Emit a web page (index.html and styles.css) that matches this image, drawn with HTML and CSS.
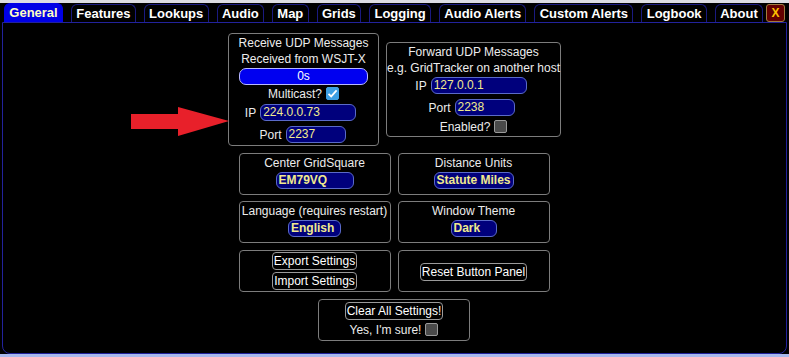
FILE: index.html
```html
<!DOCTYPE html>
<html>
<head>
<meta charset="utf-8">
<link rel="stylesheet" href="styles.css">
</head>
<body>
<div class="topstrip"></div>
<div class="tabs">
  <div class="tab active">General</div>
  <div class="tab">Features</div>
  <div class="tab">Lookups</div>
  <div class="tab">Audio</div>
  <div class="tab">Map</div>
  <div class="tab">Grids</div>
  <div class="tab">Logging</div>
  <div class="tab">Audio Alerts</div>
  <div class="tab">Custom Alerts</div>
  <div class="tab">Logbook</div>
  <div class="tab">About</div>
  <div class="close">X</div>
</div>
<div class="panel">
  <div class="row row1">
    <div class="box recv">
      <div class="line">Receive UDP Messages</div>
      <div class="line">Received from WSJT-X</div>
      <div class="bar">0s</div>
      <div class="field">Multicast? <span class="cb checked"><svg width="13" height="13" viewBox="0 0 13 13"><path d="M2.5 6.8 L5.2 9.4 L10.6 3.4" fill="none" stroke="#fff" stroke-width="1.8"/></svg></span></div>
      <div class="field f-ip">IP <span class="inp w95">224.0.0.73</span></div>
      <div class="field f-port">Port <span class="inp w59">2237</span></div>
    </div>
    <div class="box fwd">
      <div class="line">Forward UDP Messages</div>
      <div class="line">e.g. GridTracker on another host</div>
      <div class="field f-ip2">IP <span class="inp w95">127.0.0.1</span></div>
      <div class="field f-port2">Port <span class="inp w59">2238</span></div>
      <div class="field f-en">Enabled? <span class="cb"></span></div>
    </div>
  </div>
  <div class="row">
    <div class="box small">
      <div class="line">Center GridSquare</div>
      <span class="inp bold w77">EM79VQ</span>
    </div>
    <div class="box small">
      <div class="line">Distance Units</div>
      <span class="inp bold sel w79">Statute Miles</span>
    </div>
  </div>
  <div class="row row3">
    <div class="box small">
      <div class="line">Language (requires restart)</div>
      <span class="inp bold sel w52">English</span>
    </div>
    <div class="box small">
      <div class="line">Window Theme</div>
      <span class="inp bold sel w45">Dark</span>
    </div>
  </div>
  <div class="row">
    <div class="box small btns">
      <span class="btn">Export Settings</span>
      <span class="btn">Import Settings</span>
    </div>
    <div class="box small center">
      <span class="btn">Reset Button Panel</span>
    </div>
  </div>
  <div class="row">
    <div class="box small clear">
      <span class="btn">Clear All Settings!</span>
      <div class="field f-sure">Yes, I'm sure! <span class="cb"></span></div>
    </div>
  </div>
  <svg class="arrow" width="102" height="32" viewBox="0 0 102 32"><polygon points="2,8 49,8 49,1 100,15 49,30 49,23 2,23" fill="#e8202a"/></svg>
</div>
<div class="bottomstrip"></div>
</body>
</html>
```
FILE: styles.css
```css
html, body {
  margin: 0;
  padding: 0;
  background: #000;
  width: 789px;
  height: 357px;
  overflow: hidden;
  font-family: "Liberation Sans", Arial, sans-serif;
}
.topstrip {
  height: 3px;
  background: #dcdce2;
}
.tabs {
  display: flex;
  gap: 8px;
  padding-left: 4px;
  height: 19px;
  align-items: flex-end;
  background: #000;
}
.tab {
  height: 18px;
  box-sizing: border-box;
  border: 1px solid #1a1a80;
  border-bottom: none;
  border-radius: 6px 6px 0 0;
  padding: 0 4.3px;
  font-size: 13px;
  font-weight: bold;
  line-height: 18px;
  color: #fff;
  background: #000;
}
.tab.active {
  background: #0000e6;
  color: #ffffc4;
  border-color: #0000e6;
  height: 19px;
}
.close {
  margin-left: -5px;
  width: 19px;
  height: 18px;
  box-sizing: border-box;
  border: 1px solid #a07c40;
  border-radius: 3px;
  background: #640000;
  color: #ffc000;
  font-size: 12px;
  font-weight: bold;
  line-height: 16px;
  text-align: center;
}
.panel {
  position: relative;
  margin-left: 2px;
  width: 785px;
  height: 332px;
  box-sizing: border-box;
  border: 1px solid #22229c;
  border-radius: 0 0 8px 8px;
  padding-top: 10px;
  display: flex;
  flex-direction: column;
  align-items: center;
  gap: 7px;
  background: #000;
}
.bottomstrip {
  height: 3px;
  background: #a8b8ec;
}
.row {
  display: flex;
  gap: 7px;
  align-items: center;
  justify-content: center;
  margin-left: -1px;
}
.row1 { margin-left: 0; }
.row3 { margin-top: -1px; }
.box {
  box-sizing: border-box;
  border: 1px solid #7c7c7c;
  border-radius: 4px;
  color: #ececec;
  font-size: 12px;
  line-height: 16px;
  text-align: center;
  display: flex;
  flex-direction: column;
  align-items: center;
}
.recv {
  width: 151px;
  height: 113px;
  padding-top: 1px;
}
.fwd {
  width: 175px;
  height: 95px;
  padding-top: 1px;
}
.small {
  width: 152px;
  height: 42px;
  padding-top: 1px;
}
.line { white-space: nowrap; }
.bar {
  width: 129px;
  height: 17px;
  box-sizing: border-box;
  margin-top: 1px;
  border: 1px solid #b8b8ff;
  border-radius: 7px;
  background: #0000f0;
  color: #fff;
  line-height: 15px;
}
.field {
  display: flex;
  align-items: center;
  gap: 4px;
  height: 17px;
}
.f-ip { margin-top: 2px; margin-left: -6px; }
.f-port { margin-top: 5px; margin-left: -2px; }
.f-ip2 { margin-top: 1px; margin-left: -5px; }
.f-port2 { margin-top: 5px; margin-left: -4px; }
.f-en { margin-top: 2px; }
.inp {
  display: inline-block;
  box-sizing: border-box;
  height: 17px;
  border: 1px solid #5a6ac8;
  border-radius: 6px;
  background: #00007c;
  color: #f0ea8e;
  font-size: 12px;
  line-height: 15px;
  text-align: left;
  padding-left: 2px;
}
.small .inp { margin-top: 1px; }
.bold { font-weight: bold; }
.w95 { width: 96px; }
.w59 { width: 60px; }
.w77 { width: 78px; }
.w79 { width: 80px; }
.w52 { width: 53px; }
.w45 { width: 46px; }
.cb {
  display: inline-block;
  width: 13px;
  height: 13px;
  box-sizing: border-box;
  border: 1px solid #9a9a9a;
  border-radius: 2px;
  background: #4a4a4a;
}
.cb svg { display: block; margin: -1px; }
.cb.checked {
  background: #3d9fe2;
  border-color: #3d9fe2;
}
.btn {
  display: inline-block;
  box-sizing: border-box;
  height: 18px;
  border: 1px solid #9a9a9a;
  border-radius: 4px;
  background: #000;
  color: #fff;
  font-size: 12px;
  line-height: 16px;
  padding: 0 1px;
  white-space: nowrap;
}
.btns {
  padding-top: 0;
  gap: 2px;
  justify-content: center;
}
.center { justify-content: center; }
.clear {
  padding-top: 2px;
  gap: 1px;
}
.arrow {
  position: absolute;
  left: 126px;
  top: 83px;
}
```
